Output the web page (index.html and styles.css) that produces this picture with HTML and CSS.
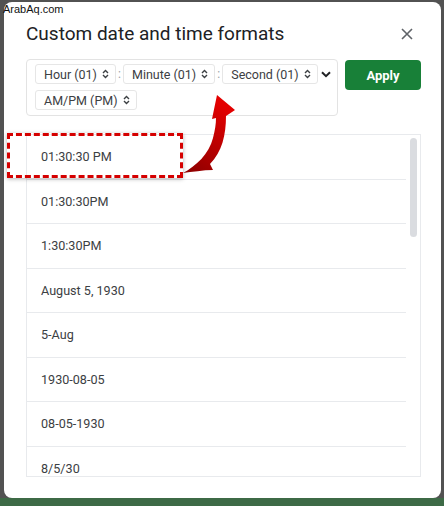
FILE: index.html
```html
<!DOCTYPE html>
<html lang="en">
<head>
  <meta charset="UTF-8">
  <title>Custom date and time formats</title>
  <link rel="stylesheet" href="styles.css">
</head>
<body>

  <div class="dialog">
    <div class="dialog-head">
      <h1>Custom date and time formats</h1>
      <button class="close" aria-label="Close">
        <svg width="12" height="12" viewBox="0 0 12 12"><path d="M1 1L11 11M11 1L1 11" stroke="#5f6368" stroke-width="1.6"/></svg>
      </button>
    </div>

    <div class="toolbar">
      <div class="format-box">
        <div class="chip-row">
          <span class="chip"><span>Hour (01)</span><svg class="updown" width="7" height="10" viewBox="0 0 7 10"><path d="M1 4L3.5 1.5L6 4M1 6L3.5 8.5L6 6" fill="none" stroke="#3c4043" stroke-width="1.4"/></svg></span>
          <span class="sep">:</span>
          <span class="chip"><span>Minute (01)</span><svg class="updown" width="7" height="10" viewBox="0 0 7 10"><path d="M1 4L3.5 1.5L6 4M1 6L3.5 8.5L6 6" fill="none" stroke="#3c4043" stroke-width="1.4"/></svg></span>
          <span class="sep">:</span>
          <span class="chip"><span>Second (01)</span><svg class="updown" width="7" height="10" viewBox="0 0 7 10"><path d="M1 4L3.5 1.5L6 4M1 6L3.5 8.5L6 6" fill="none" stroke="#3c4043" stroke-width="1.4"/></svg></span>
          <svg class="more" width="10" height="7" viewBox="0 0 10 7"><path d="M1 1.2L5 5.2L9 1.2" fill="none" stroke="#202124" stroke-width="2"/></svg>
        </div>
        <div class="chip-row">
          <span class="chip"><span>AM/PM (PM)</span><svg class="updown" width="7" height="10" viewBox="0 0 7 10"><path d="M1 4L3.5 1.5L6 4M1 6L3.5 8.5L6 6" fill="none" stroke="#3c4043" stroke-width="1.4"/></svg></span>
        </div>
      </div>
      <button class="apply">Apply</button>
    </div>

    <div class="list">
      <div class="rows">
        <div class="row">01:30:30 PM</div>
        <div class="row">01:30:30PM</div>
        <div class="row">1:30:30PM</div>
        <div class="row">August 5, 1930</div>
        <div class="row">5-Aug</div>
        <div class="row">1930-08-05</div>
        <div class="row">08-05-1930</div>
        <div class="row">8/5/30</div>
      </div>
      <div class="scrollbar"><div class="thumb"></div></div>
    </div>
  </div>

  <!-- annotations drawn over the screenshot -->
  <div class="watermark">ArabAq.com</div>
  <div class="highlight"></div>
  <svg class="arrow" width="444" height="506" viewBox="0 0 444 506">
    <defs>
      <linearGradient id="arrowFill" x1="0" y1="1" x2="0.5" y2="0">
        <stop offset="0" stop-color="#8a0000"/>
        <stop offset="1" stop-color="#e30000"/>
      </linearGradient>
    </defs>
    <path d="M183 173 C196 166 209 154 213 138 C215 130 216 124 216 118 L212 119 L217 95 L235 110 L226 116 C226 135 222 152 210 164 L213 170 C203 170 192 172 183 173 Z" fill="url(#arrowFill)"/>
  </svg>

</body>
</html>
```

FILE: styles.css
```css
body {
  margin: 0;
  width: 444px;
  height: 506px;
  overflow: hidden;
  font-family: Roboto, "Liberation Sans", sans-serif;
  background: linear-gradient(to bottom, #525252 0, #525252 498px, #3d6a46 498px);
  position: relative;
}

.dialog {
  margin: 2px 3px 0 4px;
  height: 496px;
  box-sizing: border-box;
  background: white;
  border-radius: 8px;
  padding: 20px 20px 21px 22px;
  display: flex;
  flex-direction: column;
}

.dialog-head {
  display: flex;
  align-items: center;
  justify-content: space-between;
}

h1 {
  margin: 0;
  font-size: 19px;
  line-height: 24px;
  font-weight: 400;
  color: #202124;
}

.close {
  width: 24px;
  height: 24px;
  border: none;
  background: none;
  padding: 0;
  margin-right: 2px;
  display: flex;
  align-items: center;
  justify-content: center;
}

.toolbar {
  display: flex;
  align-items: flex-start;
  gap: 7px;
  margin-top: 13px;
}

.format-box {
  width: 312px;
  height: 57px;
  box-sizing: border-box;
  border: 1px solid #e3e3e3;
  border-radius: 4px;
  padding: 4px 8px;
  display: flex;
  flex-direction: column;
  gap: 6px;
}

.chip-row {
  display: flex;
  align-items: center;
}

.chip {
  flex-shrink: 0;
  height: 20px;
  box-sizing: border-box;
  border: 1px solid #e6e6e6;
  border-radius: 3px;
  padding: 0 6px 0 8px;
  display: inline-flex;
  align-items: center;
  gap: 5px;
  font-size: 12.5px;
  color: #3c4043;
  white-space: nowrap;
}

.sep {
  flex-shrink: 0;
  width: 7px;
  text-align: center;
  font-size: 12px;
  color: #9aa0a6;
}

.more {
  flex-shrink: 0;
  margin-left: 3px;
}

.apply {
  margin-top: 1px;
  width: 76px;
  height: 30px;
  border: none;
  border-radius: 4px;
  background: #188038;
  color: white;
  font-family: Roboto, "Liberation Sans", sans-serif;
  font-size: 13px;
  font-weight: 700;
}

.list {
  margin-top: 18px;
  flex: 1;
  border: 1px solid #e8eaed;
  display: flex;
  overflow: hidden;
}

.rows {
  flex: 1;
}

.row {
  height: 44.5px;
  box-sizing: border-box;
  border-bottom: 1px solid #e8eaed;
  padding-left: 14px;
  display: flex;
  align-items: center;
  font-size: 12.6px;
  color: #3c4043;
}

.scrollbar {
  width: 14px;
}

.thumb {
  width: 7px;
  height: 99px;
  margin: 3px 0 0 4px;
  border-radius: 4px;
  background: #dadce0;
}

.watermark {
  position: absolute;
  left: 3px;
  top: 3px;
  font-family: "Liberation Sans", Arial, sans-serif;
  font-size: 11px;
  color: #111;
}

.highlight {
  position: absolute;
  left: 7px;
  top: 133px;
  width: 176px;
  height: 45px;
  box-sizing: border-box;
  border: 3px dashed #d50000;
  box-shadow: 0 1px 4px rgba(0, 0, 0, 0.3);
}

.arrow {
  position: absolute;
  left: 0;
  top: 0;
  pointer-events: none;
}
```
